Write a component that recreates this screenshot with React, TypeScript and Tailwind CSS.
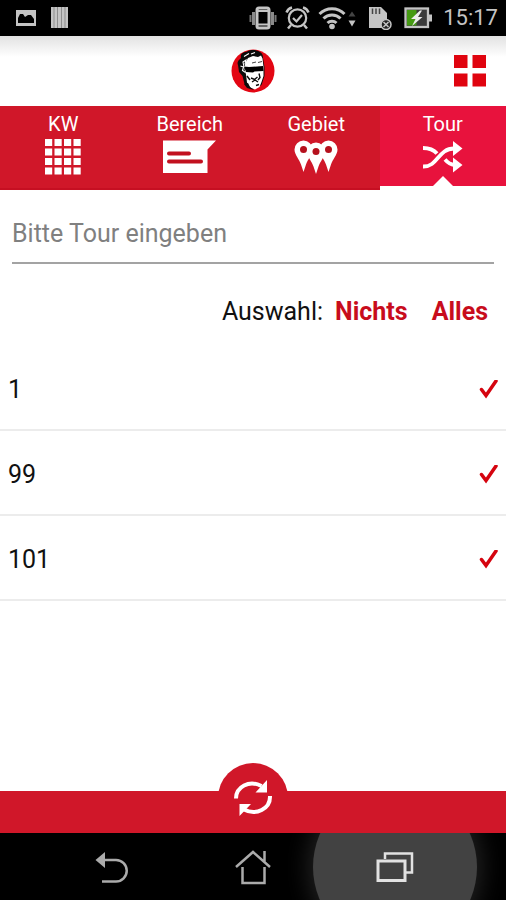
import { useState } from 'react';
import { cva } from 'class-variance-authority';
import clsx from 'clsx';

const TOURS = ['1', '99', '101'];

function StatusBar() {
  return (
    <div className="flex h-9 items-center justify-between bg-black pr-2 pl-4 text-[#c4c4c4]">
      <div className="flex items-center gap-3.5">
        <svg width="20" height="18" viewBox="0 0 20 18" aria-hidden="true">
          <rect x="0" y="1" width="20" height="16" fill="currentColor" />
          <path d="M2 14V9l2-4h3l2 3 3-2h3l3 4v4z" fill="#000" />
        </svg>
        <svg width="20" height="22" viewBox="0 0 20 22" aria-hidden="true">
          <rect x="1" width="17" height="21" fill="currentColor" />
          <path d="M4 0v21M7.5 0v21M11.5 0v21M15 0v21" stroke="#8d8d8d" strokeWidth="1" />
        </svg>
      </div>
      <div className="flex items-center">
        {/* Vibrate */}
        <svg className="mr-2" width="28" height="24" viewBox="0 0 28 24" fill="none" stroke="currentColor" aria-hidden="true">
          <rect x="8" y="2" width="12" height="20" rx="2" strokeWidth="3" />
          <path d="M8 5h12M8 18.5h12" strokeWidth="2" />
          <path d="M4.500 6v13M23.500 6v13" strokeWidth="3" stroke="#8a8a8a" />
          <path d="M1.500 9v7M26.500 9v7" strokeWidth="2" stroke="#777" />
        </svg>
        {/* Alarm */}
        <svg className="mr-2" width="25" height="24" viewBox="0 0 25 24" fill="none" stroke="currentColor" aria-hidden="true">
          <circle cx="12.500" cy="12" r="8.700" strokeWidth="2.200" />
          <path d="M8 12l3.500 3.500L17 9" strokeWidth="2.200" />
          <path d="M1.500 6.500A8 8 0 0 1 7 1.500M18 1.500a8 8 0 0 1 5.500 5M6 19l-3 3.500M19 19l3 3.500" strokeWidth="2.500" />
        </svg>
        {/* Wifi */}
        <svg className="mr-3" width="38" height="24" viewBox="0 0 38 24" fill="none" stroke="currentColor" aria-hidden="true">
          <path d="M1.500 8a17.500 17.500 0 0 1 25 0" strokeWidth="3" />
          <path d="M5.500 12.500a12 12 0 0 1 17 0" strokeWidth="3" />
          <path d="M9.500 17a6.500 6.500 0 0 1 9 0" strokeWidth="3" />
          <circle cx="14" cy="20.500" r="2.800" fill="currentColor" stroke="none" />
          <path d="M30.500 10.500l3.500-5 3.500 5z" fill="#444" stroke="none" />
          <path d="M30.500 14.500h7l-3.500 6z" fill="currentColor" stroke="none" />
        </svg>
        {/* SD card */}
        <svg className="mr-3" width="24" height="24" viewBox="0 0 24 24" aria-hidden="true">
          <path d="M1 1h12l6 6v15H1z" fill="currentColor" />
          <path d="M4.500 2.500V8M8 2.500V8M11.500 2.500V8" stroke="#444" strokeWidth="1.500" />
          <circle cx="18" cy="18.500" r="5" fill="#222" stroke="currentColor" strokeWidth="1.500" />
          <path d="M15.500 16l5 5M20.500 16l-5 5" stroke="currentColor" strokeWidth="1.500" />
        </svg>
        {/* Battery */}
        <svg className="mr-2.5" width="29" height="22" viewBox="0 0 29 22" aria-hidden="true">
          <rect x="1.500" y="1.500" width="22.500" height="18.500" fill="#3b3b3b" stroke="currentColor" strokeWidth="2.300" />
          <rect x="3" y="3" width="9.500" height="15.500" fill="#459a12" />
          <path d="M25 7.500h3v7h-3z" fill="currentColor" />
          <path d="M16 3.500L7 12h4.500L8 19 18.500 10H14l4-6.500z" fill="#ececec" />
        </svg>
        <span className="text-[22px] leading-7">15:17</span>
      </div>
    </div>
  );
}

function Logo() {
  return (
    <svg width="44" height="44" viewBox="0 0 44 44" role="img" aria-label="Logo">
      <circle cx="22" cy="22" r="21.500" fill="#e30613" />
      {/* hair and back of the head */}
      <path d="M10 9c-1-4 2-6 5-6 4-3 11-2.500 14 0 2 1 3 3 3 6l1.500 9v9l-3 9-7 4-6-1-4-4-2-8-3.500-4-1-7c-1-2 0-4 1-5z" fill="#0b0b0b" />
      {/* face */}
      <path d="M17 9l5-2 5 1 3-1.500 1.500 3 1 8.500v9l-2 6-2 5-4.500 2.500-5-2-3-5-1-8-1.500-5 1-7z" fill="#fff" />
      <path d="M12 13l3-2-1 4 2 1-3 2zM13 7.500l5-3M20 5l4-1.500M9.500 17l3 1-1 3.500 3 2" fill="none" stroke="#fff" strokeWidth="1.100" />
      {/* bar over the eyes */}
      <path d="M13 17.500l5 .5 14-1 .5 5-9 .5-1.500 1-7-.5z" fill="#000" />
      <path d="M21 14l4-1M27 13.500l4-1" stroke="#444" strokeWidth="1" />
      {/* mouth and shading */}
      <path d="M20 29l3.500 1.500 3-2.500M21 33l3-2 3 2M28 24.500l1 4-2 2.500M16 27l3 4M25 36.500l3-1" fill="none" stroke="#0b0b0b" strokeWidth="1.400" />
      <path d="M13 35l4-1 2 4 4 3-7-2z" fill="#0b0b0b" />
    </svg>
  );
}

function CalendarGridIcon() {
  const cells = [0, 9.5, 19, 28.5];
  return (
    <svg width="36" height="36" viewBox="0 0 36 36" fill="currentColor" aria-hidden="true">
      {cells.map((y) => cells.map((x) => <rect key={`${x}-${y}`} x={x} y={y} width="7.200" height="7" />))}
    </svg>
  );
}

function AreaIcon() {
  return (
    <svg width="53" height="36" viewBox="0 0 53 36" aria-hidden="true">
      <path d="M0 1.500h53l-8.500 9V34H0z" fill="currentColor" />
      <path d="M6 14.500h20M6 22.500h32" stroke="#c2101f" strokeWidth="4" strokeLinecap="round" />
    </svg>
  );
}

function PinsIcon() {
  return (
    <svg width="44" height="36" viewBox="0 0 44 36" aria-hidden="true">
      <g fill="currentColor">
        <path d="M9.500 1.500a9 9 0 0 1 9 9c0 5-5 10-6.500 15L9.500 33 7 25.500C5.500 20.500.5 15.500.5 10.500a9 9 0 0 1 9-9z" />
        <path d="M34.500 1.500a9 9 0 0 1 9 9c0 5-5 10-6.500 15L34.500 33 32 25.500c-1.500-5-6.500-10-6.500-15a9 9 0 0 1 9-9z" />
        <path d="M22 3.500a9 9 0 0 1 9 9c0 5-5 10-6.500 15L22 35l-2.500-7.500C18 22.500 13 17.500 13 12.500a9 9 0 0 1 9-9z" />
      </g>
      <g fill="#b5101d">
        <circle cx="9.500" cy="10.500" r="3.500" />
        <circle cx="22" cy="12.500" r="3.500" />
        <circle cx="34.500" cy="10.500" r="3.500" />
      </g>
    </svg>
  );
}

function ShuffleIcon() {
  return (
    <svg width="40" height="36" viewBox="0 0 40 36" aria-hidden="true">
      <g fill="none" stroke="currentColor" strokeWidth="3.800">
        <path d="M0 27.500C15 28 15 9.500 31 9.500" />
        <path d="M0 9c7 0 10.500 1.500 14 5.500" />
        <path d="M22 20.500c3 3.500 5 5 9.500 5.500" />
      </g>
      <path d="M30 2l9.500 7.500L30 17zM30 18.500l9.500 7.500L30 33.500z" fill="currentColor" />
    </svg>
  );
}

const TABS = [
  { id: 'kw', label: 'KW', icon: <CalendarGridIcon /> },
  { id: 'bereich', label: 'Bereich', icon: <AreaIcon /> },
  { id: 'gebiet', label: 'Gebiet', icon: <PinsIcon /> },
  { id: 'tour', label: 'Tour', icon: <ShuffleIcon /> },
];

const tabClass = cva('relative flex flex-col items-center pt-1 text-white', {
  variants: {
    active: {
      true: 'mb-1 bg-[#e8123d]',
      false: 'border-b-2 border-[#c60f22] bg-[#d01729]',
    },
  },
});

export default function App() {
  const [tab, setTab] = useState('tour');
  const [query, setQuery] = useState('');
  const [selected, setSelected] = useState(TOURS);

  const toggle = (tour: string) =>
    setSelected((old) => (old.includes(tour) ? old.filter((x) => x !== tour) : [...old, tour]));

  const visible = TOURS.filter((x) => x.includes(query));

  return (
    <div className="flex min-h-screen flex-col bg-white font-[Roboto,sans-serif] text-[#111]">
      <StatusBar />

      <header className="grid h-[70px] grid-cols-[1fr_auto_1fr] items-center bg-linear-to-b from-[#e2e2e2] to-white to-30% px-5">
        <span />
        <Logo />
        <button className="justify-self-end" aria-label="Menü">
          <svg width="32" height="32" viewBox="0 0 32 32" fill="#e0040f" aria-hidden="true">
            <path d="M0 0h13.500v13H0zM18.500 0H32v13H18.500zM0 18.500h13.500v13H0zM18.500 18.500H32v13H18.500z" />
          </svg>
        </button>
      </header>

      <nav className="grid h-[84px] grid-cols-4">
        {TABS.map(({ id, label, icon }) => (
          <button key={id} className={tabClass({ active: tab === id })} onClick={() => setTab(id)}>
            <span className="mb-px text-xl leading-7">{label}</span>
            {icon}
            {tab === id && (
              <svg className="absolute bottom-0" width="20" height="10" viewBox="0 0 20 10" fill="#fff" aria-hidden="true">
                <path d="M0 10L10 0l10 10z" />
              </svg>
            )}
          </button>
        ))}
      </nav>

      <main className="flex-1">
        <div className="px-3 pt-4">
          <input
            type="text"
            aria-label="Tour"
            placeholder="Bitte Tour eingeben"
            value={query}
            onChange={(e) => setQuery(e.target.value)}
            className="h-[58px] w-full border-b-2 border-[#a3a3a3] pb-0.5 text-[25px] outline-none placeholder:text-[#808080]"
          />
        </div>

        <div className="flex h-[82px] items-center justify-end pt-3.5 pr-[18px] text-[25px] leading-8">
          <span className="mr-3">Auswahl:</span>
          <button className="mr-6 font-bold text-[#c80c1c]" onClick={() => setSelected([])}>
            Nichts
          </button>
          <button className="font-bold text-[#c80c1c]" onClick={() => setSelected(TOURS)}>
            Alles
          </button>
        </div>

        <ul>
          {visible.map((tour) => (
            <li key={tour} className="border-b-2 border-[#ececec]">
              <label className="flex h-[83px] items-center justify-between px-2 pt-1 text-[25px]">
                {tour}
                <span className="grid">
                  <input
                    type="checkbox"
                    checked={selected.includes(tour)}
                    onChange={() => toggle(tour)}
                    className="col-start-1 row-start-1 size-5 appearance-none"
                  />
                  <svg
                    className={clsx('pointer-events-none col-start-1 row-start-1', !selected.includes(tour) && 'invisible')}
                    width="20"
                    height="20"
                    viewBox="0 0 20 20"
                    fill="none"
                    stroke="#d5040f"
                    strokeWidth="3.500"
                    aria-hidden="true"
                  >
                    <path d="M3.500 9.500l4.500 6L18 1" strokeLinecap="round" />
                  </svg>
                </span>
              </label>
            </li>
          ))}
        </ul>
      </main>

      <footer className="relative h-[42px] bg-[#d01729]">
        <button
          aria-label="Aktualisieren"
          className="absolute bottom-0 left-1/2 flex h-[70px] w-[70px] -translate-x-1/2 items-center justify-center rounded-t-full bg-[#d01729] text-white"
        >
          <svg width="40" height="38" viewBox="0 0 40 38" aria-hidden="true">
            <g fill="none" stroke="currentColor" strokeWidth="4">
              <path d="M3 19.500C3 8 16 .5 28.500 7" />
              <path d="M37 17c.5 13-14 20-26 13.500" />
            </g>
            <path d="M34 1v12.500H22.500zM6.500 25H18L6.500 37z" fill="currentColor" />
          </svg>
        </button>
      </footer>

      <div className="grid h-[67px] grid-cols-3 overflow-hidden bg-black px-10 text-[#ababab]">
        <button className="flex items-center justify-center" aria-label="Zurück">
          <svg width="34" height="36" viewBox="0 0 34 36" aria-hidden="true">
            <path d="M8 11h14a10.500 10.500 0 0 1 0 21.500H8" fill="none" stroke="currentColor" strokeWidth="2.500" />
            <path d="M1.500 11L11 3v16z" fill="currentColor" />
          </svg>
        </button>
        <button className="flex items-center justify-center" aria-label="Startseite">
          <svg width="36" height="36" viewBox="0 0 36 36" fill="none" stroke="currentColor" strokeWidth="2.500" aria-hidden="true">
            <path d="M1 18L18 3l17 15M7.500 18v16h22V18M29.500 2v11" />
          </svg>
        </button>
        <button className="relative flex items-center justify-center" aria-label="Letzte Apps">
          <span className="absolute top-1/2 left-1/2 size-[164px] -translate-1/2 rounded-full bg-[#424242] shadow-[0_0_24px_4px_#242424]" />
          <svg className="relative text-[#e2e2e2]" width="38" height="32" viewBox="0 0 38 32" aria-hidden="true">
            <path d="M9 8V2.500h27v19h-6" fill="none" stroke="currentColor" strokeWidth="2.500" />
            <rect x="2" y="10" width="27" height="19.500" fill="#424242" stroke="currentColor" strokeWidth="3" />
          </svg>
        </button>
      </div>
    </div>
  );
}
